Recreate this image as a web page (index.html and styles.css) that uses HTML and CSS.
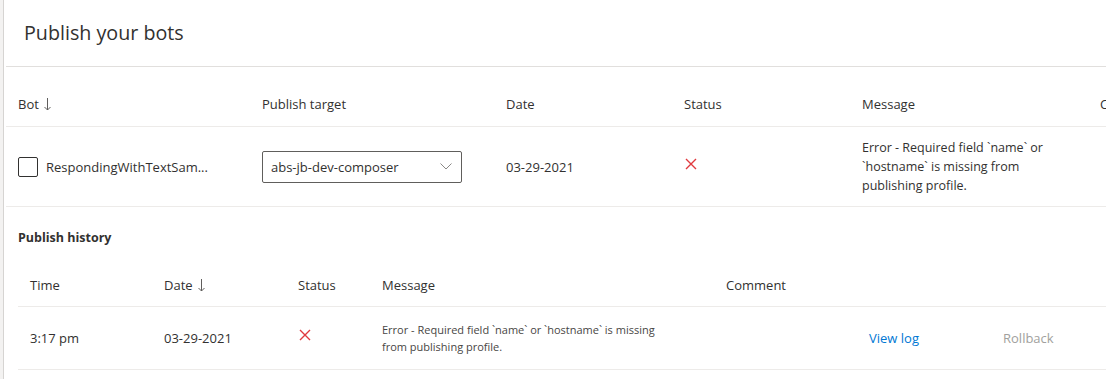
FILE: index.html
```html
<!DOCTYPE html>
<html>
<head>
<meta charset="utf-8">
<link rel="stylesheet" href="styles.css">
</head>
<body>
<div class="page">
  <div class="rail"></div>
  <main class="main">
    <h1 class="title">Publish your bots</h1>
    <div class="bots">
      <div class="bots-head">
        <div class="cell">Bot <svg class="arrow" width="7" height="13" viewBox="0 0 7 13"><path d="M3.5 0 V12 M0.5 9 L3.5 12 L6.5 9" fill="none" stroke="#605e5c" stroke-width="1"/></svg></div>
        <div class="cell">Publish target</div>
        <div class="cell">Date</div>
        <div class="cell">Status</div>
        <div class="cell">Message</div>
        <div class="cell">Comment</div>
      </div>
      <div class="bots-row">
        <div class="cell botname"><span class="checkbox"></span><span>RespondingWithTextSam...</span></div>
        <div class="cell">
          <div class="dropdown">
            <span>abs-jb-dev-composer</span>
            <svg class="chev" width="12" height="7" viewBox="0 0 12 7"><path d="M0.5 0.5 L6 6 L11.5 0.5" fill="none" stroke="#8a8886" stroke-width="1"/></svg>
          </div>
        </div>
        <div class="cell">03-29-2021</div>
        <div class="cell"><svg class="xicon" width="12" height="12" viewBox="0 0 12 12"><path d="M1 1 L11 11 M11 1 L1 11" stroke="#e0393e" stroke-width="1.4"/></svg></div>
        <div class="cell msg">Error - Required field `name` or `hostname` is missing from publishing profile.</div>
        <div class="cell"></div>
      </div>
    </div>
    <section class="history">
      <h2 class="history-title">Publish history</h2>
      <div class="hist-head">
        <div class="hcell">Time</div>
        <div class="hcell">Date <svg class="arrow" width="7" height="13" viewBox="0 0 7 13"><path d="M3.5 0 V12 M0.5 9 L3.5 12 L6.5 9" fill="none" stroke="#605e5c" stroke-width="1"/></svg></div>
        <div class="hcell">Status</div>
        <div class="hcell">Message</div>
        <div class="hcell">Comment</div>
        <div class="hcell"></div>
        <div class="hcell"></div>
      </div>
      <div class="hist-row">
        <div class="hcell">3:17 pm</div>
        <div class="hcell">03-29-2021</div>
        <div class="hcell"><svg class="xicon" width="12" height="12" viewBox="0 0 12 12"><path d="M1 1 L11 11 M11 1 L1 11" stroke="#e0393e" stroke-width="1.4"/></svg></div>
        <div class="hcell hmsg">Error - Required field `name` or `hostname` is missing from publishing profile.</div>
        <div class="hcell"></div>
        <div class="hcell link">View log</div>
        <div class="hcell disabled">Rollback</div>
      </div>
    </section>
  </main>
</div>
</body>
</html>
```

FILE: styles.css
```css
* { box-sizing: border-box; }
html, body { margin: 0; padding: 0; background: #fff; }
body {
  font-family: "Open Sans", "Noto Sans", sans-serif;
  color: #323130;
  overflow: hidden;
  width: 1106px;
  height: 379px;
}
.page { display: flex; height: 379px; }
.rail {
  width: 4px;
  flex: none;
  background: #f3f2f1;
  border-right: 1px solid #d6d4d2;
}
.main {
  flex: 1;
  min-width: 0;
  padding-left: 2px;
  overflow: hidden;
}
.title {
  margin: 0;
  height: 67px;
  padding: 19px 0 0 18px;
  font-size: 19.7px;
  font-weight: 400;
  border-bottom: 1px solid #e1dfdd;
  color: #323130;
}
.bots-head, .bots-row {
  display: grid;
  grid-template-columns: 244px 244px 178px 178px 238px 200px;
  width: 1300px;
}
.bots-head {
  height: 60px;
  align-items: end;
  padding-bottom: 13px;
  border-bottom: 1px solid #edebe9;
  font-size: 13px;
}
.bots-row {
  height: 80px;
  align-items: center;
  border-bottom: 1px solid #edebe9;
  font-size: 13px;
}
.cell { padding: 0 12px; white-space: nowrap; }
.arrow { margin-left: 2px; vertical-align: -2px; }
.botname { display: flex; align-items: center; gap: 8px; }
.checkbox {
  width: 20px; height: 20px;
  border: 1px solid #323130;
  border-radius: 2px;
  flex: none;
}
.dropdown {
  width: 200px;
  height: 32px;
  border: 1px solid #605e5c;
  border-radius: 2px;
  display: flex;
  align-items: center;
  justify-content: space-between;
  padding: 0 8px 0 8px;
  font-size: 13px;
}
.chev { margin-right: 1px; }
.xicon { display: block; margin-left: 1px; margin-bottom: 6px; }
.msg {
  white-space: normal;
  font-size: 12.5px;
  line-height: 19px;
  padding-right: 20px;
}
.history { padding-left: 12px; }
.history-title {
  margin: 0;
  padding-top: 22px;
  height: 53px;
  font-size: 12.5px;
  font-weight: 700;
}
.hist-head, .hist-row {
  display: grid;
  grid-template-columns: 134px 134px 84px 344px 143px 134px 120px;
  width: 1200px;
}
.hist-head {
  height: 47px;
  align-items: center;
  padding-top: 3px;
  border-bottom: 1px solid #edebe9;
  font-size: 13px;
}
.hist-row {
  height: 63px;
  align-items: center;
  border-bottom: 1px solid #edebe9;
  font-size: 13px;
}
.hcell { padding: 0 12px; white-space: nowrap; }
.hmsg {
  white-space: normal;
  font-size: 11px;
  line-height: 17px;
  width: 300px;
  color: #484644;
}
.link { color: #0078d4; }
.disabled { color: #a19f9d; }
```
